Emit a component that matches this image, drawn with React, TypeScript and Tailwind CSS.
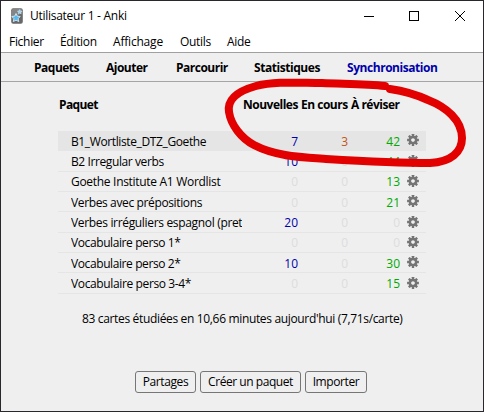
import React from "react";

type Deck = { name: string; fresh: number; learn: number; due: number; track: string };

const decks: Deck[] = [
  { name: "B1_Wortliste_DTZ_Goethe", fresh: 7, learn: 3, due: 42, track: "tracking-[-0.38px]" },
  { name: "B2 Irregular verbs", fresh: 10, learn: 0, due: 44, track: "tracking-[-0.4px]" },
  { name: "Goethe Institute A1 Wordlist", fresh: 0, learn: 0, due: 13, track: "tracking-[-0.3px]" },
  { name: "Verbes avec prépositions", fresh: 0, learn: 0, due: 21, track: "tracking-[-0.37px]" },
  { name: "Verbes irréguliers espagnol (pret", fresh: 20, learn: 0, due: 0, track: "tracking-[-0.33px]" },
  { name: "Vocabulaire perso 1*", fresh: 0, learn: 0, due: 0, track: "tracking-[-0.4px]" },
  { name: "Vocabulaire perso 2*", fresh: 10, learn: 0, due: 30, track: "tracking-[-0.4px]" },
  { name: "Vocabulaire perso 3-4*", fresh: 0, learn: 0, due: 15, track: "tracking-[-0.37px]" },
];

function Gear() {
  return (
    <svg viewBox="-6 -6 12 12" className="-mt-px ml-[7px] h-3 w-3 shrink-0 text-[#747474]">
      {[0, 45, 90, 135].map((a) => (
        <rect key={a} x="-1.2" y="-5.9" width="2.4" height="11.8" rx="0.2" fill="currentColor" transform={`rotate(${a})`} />
      ))}
      <circle r="3.1" fill="#efefef" stroke="currentColor" strokeWidth="2.5" />
    </svg>
  );
}

function AppIcon() {
  return (
    <svg viewBox="0 0 12 16" className="h-4 w-3">
      <rect x="0.2" y="0.2" width="11.6" height="15.6" rx="2" fill="#686868" />
      <path d="M1 2q0-1 1-1h8q1 0 1 1v3L1 11z" fill="#858585" />
      <path d="M5 5.5l1.3 2.7 3 .3-2.2 2.1.7 3L5 12.2l-2.7 1.4.6-3L.8 8.5l2.9-.3z" fill="#58b9ef" stroke="#dff3ff" strokeWidth="0.8" />
      <path d="M8.7 1.5l.7 1.4 1.7.2-1.2 1.2.3 1.6-1.5-.8-1.4.8.2-1.6-1.1-1.2 1.6-.2z" fill="#9bd5f5" stroke="#e4f4ff" strokeWidth="0.4" />
    </svg>
  );
}

function Count({ value, color, width }: { value: number; color: string; width: string }) {
  return <span className={`${width} shrink-0 pt-[2px] text-right ${value ? color : "text-[#dddddd]"}`}>{value}</span>;
}

export default function App() {
  return (
    <div className="relative flex h-[412px] w-[484px] flex-col overflow-hidden border border-[#29272d] bg-[#efefef] font-['Open_Sans','Noto_Sans',sans-serif] text-[12px] leading-4 whitespace-nowrap text-black">
      <header className="flex h-[29px] shrink-0 items-center bg-white pl-[10px]">
        <AppIcon />
        <h1 className="ml-[7px] pt-px tracking-[-0.27px]">Utilisateur 1 - Anki</h1>
        <svg viewBox="0 0 102 12" className="mr-[17px] ml-auto h-3 w-[102px]" fill="none" stroke="black" shapeRendering="crispEdges">
          <path d="M0 6.5h10" />
          <rect x="45.5" y="1.5" width="9" height="9" />
          <path d="M91 1l10 10M101 1L91 11" shapeRendering="auto" />
        </svg>
      </header>
      <nav className="flex h-[23px] shrink-0 items-center border-b border-[#a0a0a0] bg-white pt-[2px] pl-2">
        <span className="w-[51px] tracking-[-0.3px]">Fichier</span>
        <span className="w-[53px] tracking-[-0.3px]">Édition</span>
        <span className="w-[67px] tracking-[-0.2px]">Affichage</span>
        <span className="w-[47px] tracking-[-0.3px]">Outils</span>
        <span className="tracking-[-0.3px]">Aide</span>
      </nav>
      <nav className="flex h-[29px] shrink-0 items-center border-b border-[#a5a5a5] pt-[2px] pl-[33px] font-bold">
        <span className="w-[72px] tracking-[-0.5px]">Paquets</span>
        <span className="w-[70px] tracking-[-0.5px]">Ajouter</span>
        <span className="w-[78px] tracking-[-0.5px]">Parcourir</span>
        <span className="w-[93px] tracking-[-0.45px]">Statistiques</span>
        <span className="tracking-[-0.45px] text-[#0000aa]">Synchronisation</span>
      </nav>
      <main className="flex flex-col">
        <div className="mt-[15px] flex h-4 pl-[58px] font-bold">
          <span className="w-[184px] tracking-[-0.6px]">Paquet</span>
          <span className="w-[58px] tracking-[-0.5px]">Nouvelles</span>
          <span className="w-[50px] tracking-[-0.5px]">En cours</span>
          <span className="tracking-[-0.5px]">À réviser</span>
        </div>
        <div className="mt-[18px] ml-[57px] w-[368px]">
          {decks.map((d, i) => (
            <div key={d.name} className={`flex h-[20.35px] items-center border-b border-[#e5e5e5] ${i === 0 ? "bg-[#e5e5e5]" : ""}`}>
              <span className={`ml-[13px] w-[171px] shrink-0 overflow-hidden pt-[2px] ${d.track}`}>{d.name}</span>
              <Count value={d.fresh} color="text-[#0000aa]" width="w-[56px]" />
              <Count value={d.learn} color="text-[#c35617]" width="w-[50px]" />
              <Count value={d.due} color="text-[#00aa00]" width="w-[52px]" />
              <Gear />
            </div>
          ))}
        </div>
        <p className="mt-[17px] pl-[81px] tracking-[-0.34px]">83 cartes étudiées en 10,66 minutes aujourd'hui (7,71s/carte)</p>
        <div className="mt-11 ml-[134px] flex gap-1">
          <button className="h-[22px] w-[61px] rounded-[3px] border border-[#767676] pt-px tracking-[-0.4px]">Partages</button>
          <button className="h-[22px] w-[101px] rounded-[3px] border border-[#767676] pt-px tracking-[-0.45px]">Créer un paquet</button>
          <button className="h-[22px] w-[62px] rounded-[3px] border border-[#767676] pt-px tracking-[-0.4px]">Importer</button>
        </div>
      </main>
      <svg viewBox="0 0 484 412" className="pointer-events-none absolute -top-px -left-px h-[412px] w-[484px]" fill="none" stroke="#e20000" strokeWidth="8" strokeLinecap="round" strokeLinejoin="round">
        <path d="M385 86C366 84 343 84 322 83C299 83 275 81 256 86C238 91 227 99 229 112C231 125 241 138 254 145C275 156 299 157 326 159C360 161 404 163 430 163C451 162 462 152 462 138C462 120 446 107 428 100C415 94 404 91 390 89" />
      </svg>
    </div>
  );
}
